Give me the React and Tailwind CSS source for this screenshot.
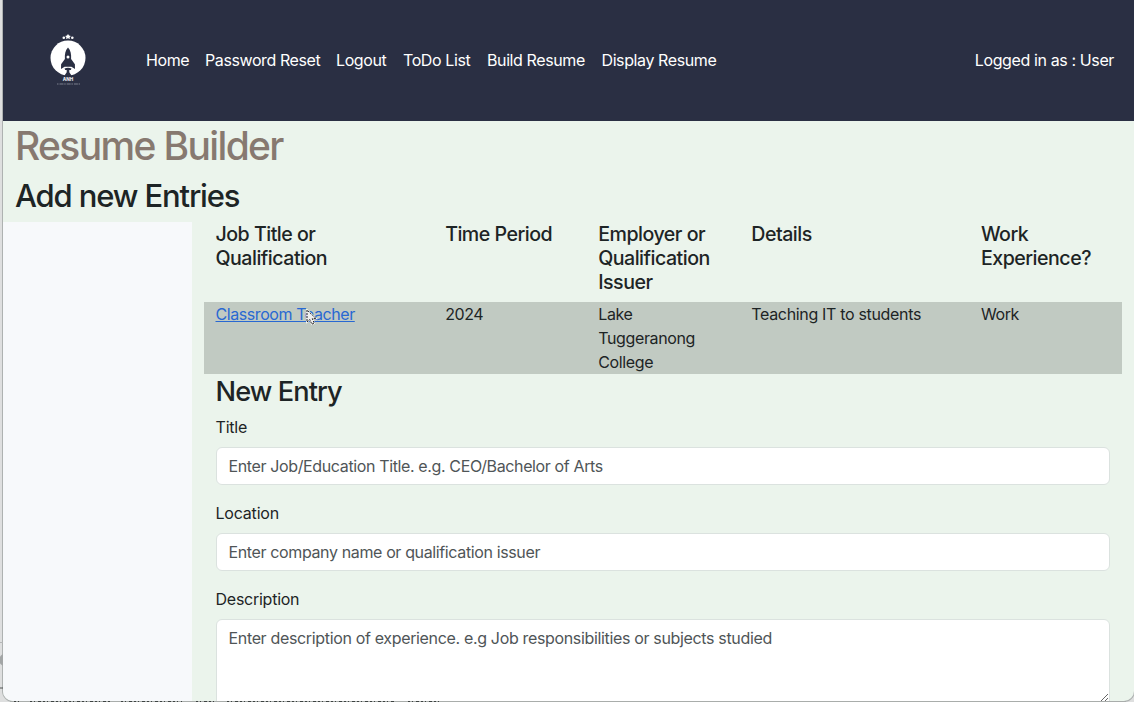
import React from 'react';

const nav = [
  ['Home', 'w-[43px]'],
  ['Password Reset', 'w-[115px]'],
  ['Logout', 'w-[51px]'],
  ['ToDo List', 'w-[68px]'],
  ['Build Resume', 'w-[98.5px]'],
  ['Display Resume', 'w-[116px]'],
];

function Logo() {
  return (
    <svg width="40" height="54" viewBox="0 0 40 54" className="block">
      <circle cx="20" cy="25" r="17.5" fill="#fff" />
      <path d="M20 1l1 1.600 1.900.3-1.300 1.300.3 1.900-1.900-.9-1.900.9.3-1.900-1.300-1.300 1.900-.3z" fill="#fff" />
      <circle cx="15.800" cy="4.800" r="1.300" fill="#fff" />
      <circle cx="24.300" cy="4.800" r="1.300" fill="#fff" />
      <path d="M20 14.500c-2.700 3-3.400 6.500-3.100 11.500l-3.800 5.300-.1 4.700 3.600-2.200h6.800l3.600 2.200-.1-4.700-3.800-5.300c.3-5-.4-8.500-3.100-11.500z" fill="#2a2f43" />
      <circle cx="20" cy="24" r="1.500" fill="#fff" />
      <path d="M16.500 35.500q3.500-1.500 7 0l-.7 1.400h-1.500v2.300l2.700 4h-8l2.700-4v-2.300h-1.500z" fill="#2a2f43" />
      <text x="20" y="48" fontSize="4.600" fontWeight="800" textAnchor="middle" fill="#e8e9ed" textLength="10.500" lengthAdjust="spacingAndGlyphs">ANH</text>
      <path d="M9 51h23" stroke="#858996" strokeWidth=".9" strokeDasharray="1.500 1 4 .7" />
    </svg>
  );
}

function Pointer() {
  return (
    <svg width="12" height="18" viewBox="0 0 12 18" className="pointer-events-none absolute left-[102px] top-[7px]">
      <path d="M1 1v12l2.800-2.500 2 4.700 2.500-1-2-4.600h3.900z" fill="#fff" stroke="#fff" strokeWidth="1.500" />
      <path d="M1 1v12l2.800-2.500 2 4.700 2.500-1-2-4.600h3.900z" fill="#eee" stroke="#222" strokeWidth="1" strokeDasharray="2 1" />
    </svg>
  );
}

function Field({ label, placeholder }) {
  return (
    <div className="mb-4">
      <label className="mb-2 block leading-6 tracking-[-0.2px]">{label}</label>
      <input
        className="block h-[38px] w-full rounded-md border border-[#dbe2df] bg-white px-3 tracking-[-0.37px] text-[#212529] outline-none placeholder:text-[#4f5557]"
        placeholder={placeholder}
      />
    </div>
  );
}

export default function App() {
  return (
    <div className="relative h-[702px] w-[1134px] overflow-hidden bg-[#dedfdf] pl-[3px] font-['Inter',sans-serif] text-base text-[#1d2425]">
      <div className="flex h-[701px] flex-col overflow-hidden rounded-b-[10px] bg-[#ebf4ec] shadow-[0_0_0_1px_#aeb2b1]">
        <header className="flex h-[121px] shrink-0 items-center bg-[#2a2f43] pl-[45px] pr-[20px] pb-[2px] text-white">
          <Logo />
          <nav className="ml-[58px] flex gap-4 whitespace-nowrap tracking-[-0.4px]">
            {nav.map(([name, width]) => (
              <a key={name} href="#" className={width}>{name}</a>
            ))}
          </nav>
          <span className="ml-auto whitespace-nowrap tracking-[-0.38px]">Logged in as : User</span>
        </header>
        <div className="h-[101px] shrink-0 px-3 font-medium">
          <h1 className="mb-2 pt-px text-[39px] leading-[47px] tracking-[-1.65px] text-[#877970]">Resume Builder</h1>
          <h2 className="text-[31px] leading-[38px] tracking-[-1.15px]">Add new Entries</h2>
        </div>
        <div className="flex min-h-0 flex-1">
          <aside className="w-[188.5px] shrink-0 bg-[#f7f9fb]" />
          <main className="min-w-0 flex-1 px-3">
            <div className="grid h-[80px] grid-cols-[3fr_2fr_2fr_3fr_2fr] text-[19.6px] font-medium leading-6 tracking-[-0.5px]">
              <h5 className="px-3">Job Title or<br />Qualification</h5>
              <h5 className="whitespace-nowrap px-3">Time Period</h5>
              <h5 className="px-3">Employer or<br />Qualification<br />Issuer</h5>
              <h5 className="px-3">Details</h5>
              <h5 className="px-3">Work<br />Experience?</h5>
            </div>
            <div className="grid h-[72px] grid-cols-[3fr_2fr_2fr_3fr_2fr] bg-[#c1cac2] leading-6 tracking-[-0.37px]">
              <div className="relative px-3">
                <a href="#" className="tracking-[-0.42px] text-[#2868d2] underline">Classroom Teacher</a>
                <Pointer />
              </div>
              <div className="px-3">2024</div>
              <div className="px-3">Lake<br />Tuggeranong<br />College</div>
              <div className="whitespace-nowrap px-3 tracking-[-0.33px]">Teaching IT to students</div>
              <div className="px-3">Work</div>
            </div>
            <form className="px-3">
              <h3 className="mb-[7px] pt-px text-[27.2px] font-medium leading-[33px] tracking-[-0.9px]">New Entry</h3>
              <Field label="Title" placeholder="Enter Job/Education Title. e.g. CEO/Bachelor of Arts" />
              <Field label="Location" placeholder="Enter company name or qualification issuer" />
              <label className="mb-2 block leading-6 tracking-[-0.25px]">Description</label>
              <textarea
                className="block h-[84px] w-full resize-y rounded-t-md border border-[#dbe2df] bg-white px-3 py-1.5 leading-6 tracking-[-0.34px] outline-none placeholder:text-[#4f5557]"
                placeholder="Enter description of experience. e.g Job responsibilities or subjects studied"
              />
            </form>
          </main>
        </div>
      </div>
      <svg width="1134" height="2" className="absolute bottom-0 left-0">
        <path d="M10 1.500H1126" stroke="#a9adab" />
        <path d="M14 1.500h6M30 1.500h82M121 1.500h61M196 1.500h20M227 1.500h168M408 1.500h34" stroke="#3d4241" strokeDasharray="2 2 1 3 3 2" />
      </svg>
      <svg width="3" height="60" className="absolute bottom-0 left-0">
        <path d="M0 .5h3" stroke="#b5b7b7" />
        <circle cx="5" cy="18" r="6" fill="#a3a6a6" />
        <path d="M0 46h3" stroke="#4c5050" />
      </svg>
    </div>
  );
}
